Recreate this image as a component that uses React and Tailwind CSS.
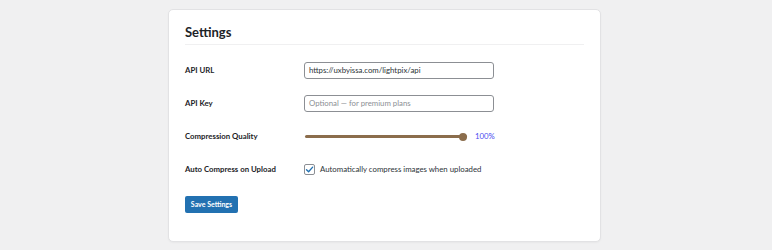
import React from "react";

export default function App() {
  return (
    <div className="min-h-[250px] w-full bg-[#f0f0f1] pt-[9px] font-['Lato',sans-serif] text-[#1d2327]">
      <div className="ml-[168px] w-[433px] h-[233px] rounded-[5px] border border-[#e2e2e4] bg-white px-[16px] pt-[13px] shadow-[0_1px_2px_rgba(0,0,0,0.04)]">
        <h2 className="border-b border-[#f0f0f1] pb-[3px] text-[13px] font-bold leading-[18px] text-[#1d2327]">Settings</h2>
        <div className="mt-[9px] flex flex-col">
          <div className="flex h-[33px] items-center">
            <div className="w-[119px] text-[7.8px] font-bold">API URL</div>
            <div className="flex h-[17px] w-[190px] items-center rounded-[3px] border border-[#8c8f94] px-[4px] text-[7.8px] text-[#2c3338]">https://uxbyissa.com/lightpix/api</div>
          </div>
          <div className="flex h-[33px] items-center">
            <div className="w-[119px] text-[7.8px] font-bold">API Key</div>
            <div className="flex h-[17px] w-[190px] items-center rounded-[3px] border border-[#8c8f94] px-[4px] text-[7.8px] text-[#8c8f94]">Optional — for premium plans</div>
          </div>
          <div className="flex h-[33px] items-center">
            <div className="w-[120px] text-[7.8px] font-bold">Compression Quality</div>
            <div className="relative flex h-[8px] w-[162px] items-center">
              <div className="h-[3px] w-full rounded-full bg-[#8b6d4c]" />
              <div className="absolute right-0 top-0 h-[8px] w-[8px] rounded-full bg-[#8b6d4c]" />
            </div>
            <div className="ml-[8px] text-[7.8px] text-[#4b4bf0]">100%</div>
          </div>
          <div className="flex h-[33px] items-center">
            <div className="w-[119px] text-[7.8px] font-bold">Auto Compress on Upload</div>
            <div className="flex items-center gap-[5px]">
              <div className="flex h-[11px] w-[11px] items-center justify-center rounded-[2px] border border-[#8c8f94] bg-white">
                <svg viewBox="0 0 12 12" className="h-[9px] w-[9px]">
                  <path d="M2 6.2 L4.8 9 L10.2 2.8" fill="none" stroke="#2271b1" strokeWidth="1.8" strokeLinecap="round" strokeLinejoin="round" />
                </svg>
              </div>
              <span className="text-[7.8px] text-[#2c3338]">Automatically compress images when uploaded</span>
            </div>
          </div>
        </div>
        <button className="mt-[10px] h-[17px] w-[53px] rounded-[2px] bg-[#2271b1] text-[7px] font-bold text-white">Save Settings</button>
      </div>
    </div>
  );
}
